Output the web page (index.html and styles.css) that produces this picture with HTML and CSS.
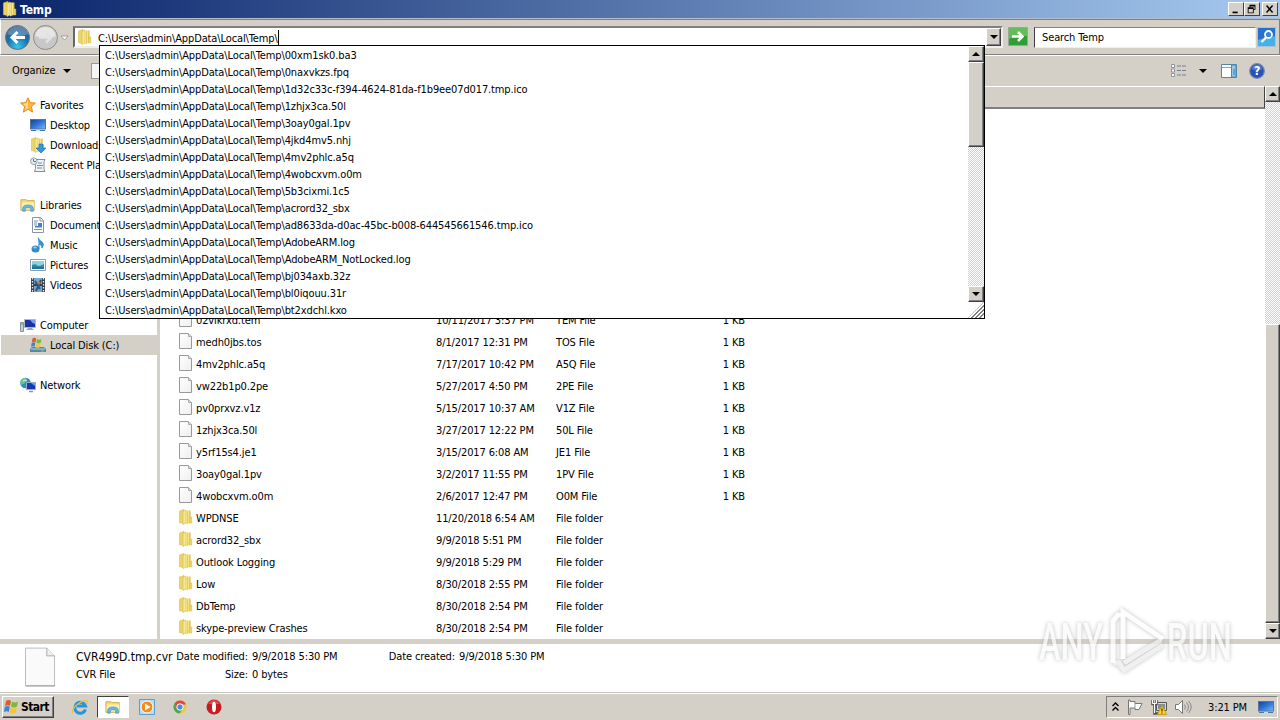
FILE: index.html
```
<!DOCTYPE html>
<html lang="en">
<head>
  <meta charset="UTF-8">
  <meta name="viewport" content="width=device-width, initial-scale=1">
  <title>Temp</title>
  <link rel="stylesheet" href="styles.css">
</head>
<body>
  <!-- Shared icons -->
  <svg class="defs" width="0" height="0">
    <defs>
      <linearGradient id="gold"><stop offset="0" stop-color="#f8eb9b"/><stop offset=".45" stop-color="#e0c04a"/><stop offset=".55" stop-color="#f5e58a"/><stop offset="1" stop-color="#d6ae32"/></linearGradient>
      <linearGradient id="blue" x2="1" y2="1"><stop offset="0" stop-color="#163f9d"/><stop offset=".5" stop-color="#2f75d5"/><stop offset="1" stop-color="#7bbcf2"/></linearGradient>
      <radialGradient id="back" cx=".5" cy=".9" r=".8"><stop offset="0" stop-color="#37c7ee"/><stop offset=".55" stop-color="#1977b5"/><stop offset="1" stop-color="#27598c"/></radialGradient>
      <linearGradient id="paper" x2="1" y2="1"><stop offset="0" stop-color="#fff"/><stop offset="1" stop-color="#eee"/></linearGradient>
    </defs>
    <symbol id="folder" viewBox="0 0 16 16">
      <path d="M1.500 2 6 .5v14l-4.500-.8z" fill="#ead46c" stroke="#d9bd4e" stroke-width=".6"/>
      <path d="M5 2.500 8 1v13l-3 1.500z" fill="#f6e88f" stroke="#d8b94b" stroke-width=".6"/>
      <path d="M8 1.500h4.500v12L8 15.500z" fill="url(#gold)"/>
      <path d="M12 8h1.800v6H11z" fill="#ecd468" stroke="#d8b94b" stroke-width=".5"/>
    </symbol>
    <symbol id="file" viewBox="0 0 16 16">
      <path d="M1.500.5h9l3 3v12h-12z" fill="url(#paper)" stroke="#999"/>
      <path d="M10.500.5v3h3" fill="#ddd" stroke="#aaa"/>
    </symbol>
    <symbol id="explorer" viewBox="0 0 18 16">
      <path d="M1 2h6l1 1h8v11H1z" fill="#f2d778" stroke="#cfac48"/>
      <path d="M2 5h14v8H2z" fill="#fbefaf"/>
      <path d="M3 15v-3q0-4 6-4t6 4v3h-3v-3q0-1-3-1t-3 1v3z" fill="#62b9e8" stroke="#3d91c7" stroke-width=".7"/>
    </symbol>
    <symbol id="screen" viewBox="0 0 16 16">
      <rect x=".5" y="2.500" width="15" height="9.500" fill="url(#blue)" stroke="#5c7396"/>
      <path d="M1 13.500h14" stroke="#4378b6"/><path d="M6 13.500h4" stroke="#b9e6ff"/>
    </symbol>
    <symbol id="flag" viewBox="0 0 16 16">
      <path d="M2 2q3-2 5 0L6 7Q4 5.500 1 7z" fill="#e3592a"/><path d="M8 2.500q3 2 6 0L13 7.500q-3 2-6 0z" fill="#7cba35"/>
      <path d="M.8 8q3-2 5 0l-1 5Q3 11.500 0 13z" fill="#3e84d6"/><path d="M6.800 8.500q3 2 6 0l-1 5q-3 2-6 0z" fill="#f5c532"/>
    </symbol>
  </svg>

  <header class="titlebar">
    <svg class="icon"><use href="#folder"/></svg>
    <h1>Temp</h1>
    <div class="win-btn"><svg viewBox="0 0 16 14"><path d="M4 10h6v2H4z"/></svg></div>
    <div class="win-btn"><svg viewBox="0 0 16 14"><path d="M5 2h7v6h-2V7h1V4H6v1H5zM3 5h7v7H3zm1 2v4h5V7z" fill-rule="evenodd"/></svg></div>
    <div class="win-btn close"><svg viewBox="0 0 16 14"><path d="m4 3 7 8m0-8-7 8" stroke="#000" stroke-width="1.700"/></svg></div>
  </header>

  <div class="navbar">
    <svg class="travel" viewBox="0 0 70 30">
      <circle cx="17.500" cy="15.500" r="12" fill="url(#back)" stroke="#68737d"/>
      <path d="M7 12q3-8 11-8t11 8q-11 4-22 0" fill="#fff" opacity=".25"/>
      <path d="M25 15.500H12m5.500-5.500L12 15.500l5.500 5.500" fill="none" stroke="#fff" stroke-width="3"/>
      <circle cx="45.500" cy="15.500" r="12" fill="#c8c8c8" stroke="#8c8c8c"/>
      <path d="M35 14q2-9 10.500-9T56 14q-10 4-21 0" fill="#eee" opacity=".8"/>
      <path d="M39 15.500h12m-5-5 5 5-5 5" fill="none" stroke="#e2e2e2" stroke-width="2.500"/>
      <path d="M61 14h7l-3.500 4z" fill="#fff" stroke="#8d8d8d" stroke-width=".8"/>
    </svg>
    <div class="address">
      <svg class="icon"><use href="#folder"/></svg>
      <span class="path">C:\Users\admin\AppData\Local\Temp\</span>
      <div class="sb-btn"><i class="down"></i></div>
    </div>
    <svg class="go" viewBox="0 0 20 20">
      <rect x=".5" y=".5" width="19" height="18" fill="#2f9f33" stroke="#9aa894"/><path d="M1 1h18v8Q9 8 1 12z" fill="#63bd5a"/>
      <path d="M4 9.500h11m-5-4.500 4.500 4.500-4.500 4.500" fill="none" stroke="#fff" stroke-width="2.500"/>
    </svg>
    <div class="search">Search Temp</div>
    <svg class="find" viewBox="0 0 20 20">
      <rect width="19" height="20" fill="#286fd0"/><path d="M0 13 19 9v11H0z" fill="#45b1e6"/><path d="M.5.500h18v19H.5z" fill="none" stroke="#a9c4de"/>
      <circle cx="11.500" cy="7.500" r="3.500" fill="#3187dc" stroke="#fff" stroke-width="1.800"/><path d="m9 10.500-4.500 4.500" stroke="#fff" stroke-width="2.400"/>
    </svg>
  </div>

  <div class="toolbar">
    <span>Organize</span><i class="down"></i>
    <div class="tool-box"></div>
    <div class="views">
      <svg width="16" height="14" viewBox="0 0 16 14"><path d="M.5.5h3v3h-3zm0 4.500h3v3h-3zm0 4.500h3v3h-3z" fill="#fff" stroke="#8b9299"/><path d="M6 2h4m1 0h4M6 6.500h4m1 0h4M6 11h4m1 0h4" stroke="#76808d"/></svg>
      <i class="down"></i>
      <svg width="16" height="14" viewBox="0 0 16 14"><path d="M.5.500h15v13H.5z" fill="#fff" stroke="#5384ac"/><path d="M1 3.500h14" stroke="#82a6c4"/><path d="M10.500 1h4.500v12h-4.500z" fill="#91cbe9" stroke="#5384ac"/><path d="M13 5v6" stroke="#397da9"/></svg>
      <svg width="16" height="16" viewBox="0 0 16 16"><circle cx="8" cy="8" r="7.300" fill="#2851b4" stroke="#7487a8" stroke-width="1.200"/><path d="M2.500 6q1-4 5.500-4t5.500 4q-5 3-11 0" fill="#6c91df" opacity=".6"/><text x="8" y="12.200" text-anchor="middle">?</text></svg>
    </div>
  </div>

  <main>
    <nav>
      <div class="group">
        <div class="item top"><svg class="icon" viewBox="0 0 16 16"><path d="m8 .8 2.200 4.800 5.200.5-4 3.500 1.200 5.500L8 12.300l-4.600 2.800 1.200-5.500-4-3.500 5.200-.5z" fill="#ffb63a" stroke="#e58a25"/><path d="M8 3v8l-3 2 1-4-3-2 4-1z" fill="#ffe391"/></svg>Favorites</div>
        <div class="item"><svg class="icon"><use href="#screen"/></svg>Desktop</div>
        <div class="item"><svg class="icon" viewBox="0 0 16 16"><use href="#folder"/><path d="M9 7h4v4h3l-5 5-5-5h3z" fill="#3396df" stroke="#176cb5" stroke-width=".6"/></svg>Downloads</div>
        <div class="item"><svg class="icon" viewBox="0 0 16 16"><path d="M5 2.500h10l-1 2v8l1 2H4.500l1-3z" fill="#edf3f6" stroke="#83919b"/><path d="M8 6h4M7 8.500h6M7 11h5" stroke="#778b9a"/><circle cx="3.800" cy="4.200" r="3.300" fill="#e5eef3" stroke="#91a1ac"/><path d="M3.500 2v2.500H6" fill="none" stroke="#697984"/></svg>Recent Places</div>
      </div>
      <div class="group">
        <div class="item top"><svg class="icon"><use href="#explorer"/></svg>Libraries</div>
        <div class="item"><svg class="icon" viewBox="0 0 16 16"><path d="M2.500.5h8l3 3v12h-11z" fill="#fff" stroke="#8794a5"/><path d="M10 .5v3.500h3.500M4 4h4M4 6h3M4 12.500h8M4 8h3" fill="none" stroke="#7191bd"/><path d="M8 6h4v4.500H5V9h3z" fill="#487ec2"/></svg>Documents</div>
        <div class="item"><svg class="icon" viewBox="0 0 16 16"><path d="M8 .5q1 3 4 4.500 3 2 0 6 .5-3-3-4v5" fill="#3493d2" stroke="#3493d2"/><ellipse cx="5.500" cy="12" rx="4" ry="3.500" fill="#328bcd"/><ellipse cx="5" cy="10.500" rx="2" ry="1" fill="#8acaf0"/></svg>Music</div>
        <div class="item"><svg class="icon" viewBox="0 0 16 16"><path d="M.5 2.500h15v11H.5z" fill="#fff" stroke="#8a9fae"/><path d="M2 4h12v8H2z" fill="#8ad2ed"/><path d="M2 8q4-2 6 1 3 0 6-2v5H2z" fill="#348e8b"/><path d="M2 10h12v2H2z" fill="#236db1"/></svg>Pictures</div>
        <div class="item"><svg class="icon" viewBox="0 0 16 16"><path d="M1 1h14v14H1z" fill="#383e46"/><path d="M4 1h8v6H4zm0 8h8v6H4z" fill="#70a9d5"/><path d="m5 4 5 8M11 3 6 14" stroke="#315578" stroke-width="2"/><circle cx="9" cy="6" r="1.500" fill="#c3733c"/><path d="M2.500 1v14m11-14v14" stroke="#eee" stroke-width="1.300" stroke-dasharray="1.500 1.500"/></svg>Videos</div>
      </div>
      <div class="group">
        <div class="item top"><svg class="icon" viewBox="0 0 16 16"><path d="M.5 5.500h3v9h-3z" fill="#c5d0d3" stroke="#84949b"/><path d="M4.500 2.500h11v8h-11z" fill="#1933a7" stroke="#aebbc4"/><path d="M10 3h5v4q-3-1-5-4" fill="#779aec"/><path d="M8 11h4l2 2H6z" fill="#9ba9ae"/><path d="M1 7h2" stroke="#67a943"/></svg>Computer</div>
        <div class="item selected"><svg class="icon" viewBox="0 0 16 16"><path d="M2 10h12l2 2v3H0v-3z" fill="#58869b"/><path d="M1 12h14" stroke="#b5d7e2"/><path d="M11 14h3" stroke="#75dd4a"/><svg x="1" width="12" height="12" viewBox="0 0 16 16"><use href="#flag"/></svg></svg>Local Disk (C:)</div>
      </div>
      <div class="group">
        <div class="item top"><svg class="icon" viewBox="0 0 16 16"><circle cx="5.500" cy="6" r="5.300" fill="#268fc4"/><path d="M2 2q3-2 5 0L5 6 1 8Q-1 4 2 2" fill="#6cc48f"/><path d="M3 4q2-2 4 0" stroke="#ddf5ff" fill="none"/><path d="M6.500 5.500h9v7h-9z" fill="#1737b5" stroke="#9aabc0"/><path d="M11 6h4v3z" fill="#769bee"/><path d="M9 14.500h4" stroke="#829aac" stroke-width="1.500"/></svg>Network</div>
      </div>
    </nav>

    <section class="files">
      <div class="columns"></div>
      <div class="list">
        <div class="row"><svg class="icon"><use href="#file"/></svg><span>02vikrxd.tem</span><span>10/11/2017 3:37 PM</span><span>TEM File</span><span>1 KB</span></div>
        <div class="row"><svg class="icon"><use href="#file"/></svg><span>medh0jbs.tos</span><span>8/1/2017 12:31 PM</span><span>TOS File</span><span>1 KB</span></div>
        <div class="row"><svg class="icon"><use href="#file"/></svg><span>4mv2phlc.a5q</span><span>7/17/2017 10:42 PM</span><span>A5Q File</span><span>1 KB</span></div>
        <div class="row"><svg class="icon"><use href="#file"/></svg><span>vw22b1p0.2pe</span><span>5/27/2017 4:50 PM</span><span>2PE File</span><span>1 KB</span></div>
        <div class="row"><svg class="icon"><use href="#file"/></svg><span>pv0prxvz.v1z</span><span>5/15/2017 10:37 AM</span><span>V1Z File</span><span>1 KB</span></div>
        <div class="row"><svg class="icon"><use href="#file"/></svg><span>1zhjx3ca.50l</span><span>3/27/2017 12:22 PM</span><span>50L File</span><span>1 KB</span></div>
        <div class="row"><svg class="icon"><use href="#file"/></svg><span>y5rf15s4.je1</span><span>3/15/2017 6:08 AM</span><span>JE1 File</span><span>1 KB</span></div>
        <div class="row"><svg class="icon"><use href="#file"/></svg><span>3oay0gal.1pv</span><span>3/2/2017 11:55 PM</span><span>1PV File</span><span>1 KB</span></div>
        <div class="row"><svg class="icon"><use href="#file"/></svg><span>4wobcxvm.o0m</span><span>2/6/2017 12:47 PM</span><span>O0M File</span><span>1 KB</span></div>
        <div class="row"><svg class="icon"><use href="#folder"/></svg><span>WPDNSE</span><span>11/20/2018 6:54 AM</span><span>File folder</span></div>
        <div class="row"><svg class="icon"><use href="#folder"/></svg><span>acrord32_sbx</span><span>9/9/2018 5:51 PM</span><span>File folder</span></div>
        <div class="row"><svg class="icon"><use href="#folder"/></svg><span>Outlook Logging</span><span>9/9/2018 5:29 PM</span><span>File folder</span></div>
        <div class="row"><svg class="icon"><use href="#folder"/></svg><span>Low</span><span>8/30/2018 2:55 PM</span><span>File folder</span></div>
        <div class="row"><svg class="icon"><use href="#folder"/></svg><span>DbTemp</span><span>8/30/2018 2:54 PM</span><span>File folder</span></div>
        <div class="row"><svg class="icon"><use href="#folder"/></svg><span>skype-preview Crashes</span><span>8/30/2018 2:54 PM</span><span>File folder</span></div>
      </div>
    </section>
    <div class="scrollbar page-scroll">
      <div class="sb-btn"><i class="up"></i></div>
      <div class="track"></div>
      <div class="thumb"></div>
      <div class="sb-btn"><i class="down"></i></div>
    </div>
  </main>

  <footer class="details">
    <svg class="big-file" viewBox="0 0 32 40"><path d="M.5.500h22l8 8v31H.5z" fill="#fafafa" stroke="#bbb"/><path d="M22.500.500v8h8" fill="#eee" stroke="#aaa"/><path d="M1 39.500h30" stroke="#999"/></svg>
    <div class="meta name"><span class="big">CVR499D.tmp.cvr</span><span>CVR File</span></div>
    <div class="meta labels"><span>Date modified:</span><span>Size:</span></div>
    <div class="meta values"><span>9/9/2018 5:30 PM</span><span>0 bytes</span></div>
    <div class="meta labels created"><span>Date created:</span></div>
    <div class="meta values"><span>9/9/2018 5:30 PM</span></div>
  </footer>

  <div class="taskbar">
    <div class="start"><svg class="icon"><use href="#flag"/></svg>Start</div>
    <div class="task"><svg class="icon" viewBox="0 0 16 16"><path d="M13.500 10.500A5.500 5.500 0 1 1 13.500 7H5" fill="none" stroke="#2795dc" stroke-width="3"/><path d="M1 14Q-1 10 6 5t9-3q1 1-1 3" fill="none" stroke="#e8c349" stroke-width="1.300"/></svg></div>
    <div class="task active"><svg class="icon"><use href="#explorer"/></svg></div>
    <div class="task"><svg class="icon" viewBox="0 0 16 16"><path d="M.5.500h15v15H.5z" fill="#b9dcf3" stroke="#5a9fd4"/><circle cx="8" cy="8" r="6" fill="#f58b1c" stroke="#fff"/><path d="m6 4.500 5.500 3.500L6 11.500z" fill="#fff"/></svg></div>
    <div class="task"><svg class="icon" viewBox="0 0 16 16"><circle cx="8" cy="8" r="6.500" fill="#f5c735"/><path d="M2.300 4.800A6.500 6.500 0 0 1 14 5.500H8L5 10z" fill="#df4936"/><path d="M2.300 4.800A6.500 6.500 0 0 0 7.500 14.500L10.500 10H5z" fill="#43a852"/><circle cx="8" cy="8" r="3.200" fill="#4689e9" stroke="#fff"/></svg></div>
    <div class="task"><svg class="icon" viewBox="0 0 16 16"><circle cx="8" cy="8" r="7.500" fill="#c51c20"/><path d="M2 5q6-8 12 0" fill="#ef6860" opacity=".6"/><ellipse cx="8" cy="8" rx="2" ry="5.300" fill="#fff"/></svg></div>
    <div class="tray">
      <svg width="7" height="10" viewBox="0 0 7 10"><path d="m.5 4 3-3 3 3m-6 4.500 3-3 3 3" fill="none" stroke="#000" stroke-width="1.400"/></svg>
      <svg width="16" height="16" viewBox="0 0 16 16"><path d="M1.500 1v14.500h1.500V9h5v1.500h4l3-6H8V2.500H3V1z" fill="#fff" stroke="#777"/><path d="M8 4v5" stroke="#999"/></svg>
      <svg width="16" height="16" viewBox="0 0 16 16"><path d="M5.500 3.500h10v8h-10z" fill="#d7dadd" stroke="#555"/><path d="M7 5h7v5H7z" fill="#868c91"/><path d="M1.500 1v4h4V1M3.500 5v9.500h4" fill="none" stroke="#555" stroke-width="2.500"/><path d="M1.500 1v3.500h4V1M3.500 5v9" fill="none" stroke="#fff"/><path d="m11 6.500 4.500 9h-9z" fill="#ffda25" stroke="#c99a18"/><path d="M11 9.500v3m0 1v1" stroke="#000"/></svg>
      <svg width="17" height="16" viewBox="0 0 17 16"><path d="M.5 5.500h3l4-4v13l-4-4h-3z" fill="#fff" stroke="#777"/><path d="M9.500 5.500q2 2.500 0 5M11.500 3.500q4 4.500 0 9M13.500 2q5.500 6 0 12" fill="none" stroke="#888"/></svg>
      <span class="clock">3:21 PM</span>
      <svg class="icon"><use href="#screen"/></svg>
    </div>
  </div>

  <!-- Address suggestions -->
  <div class="suggest">
    <ul>
      <li>C:\Users\admin\AppData\Local\Temp\00xm1sk0.ba3</li>
      <li>C:\Users\admin\AppData\Local\Temp\0naxvkzs.fpq</li>
      <li>C:\Users\admin\AppData\Local\Temp\1d32c33c-f394-4624-81da-f1b9ee07d017.tmp.ico</li>
      <li>C:\Users\admin\AppData\Local\Temp\1zhjx3ca.50l</li>
      <li>C:\Users\admin\AppData\Local\Temp\3oay0gal.1pv</li>
      <li>C:\Users\admin\AppData\Local\Temp\4jkd4mv5.nhj</li>
      <li>C:\Users\admin\AppData\Local\Temp\4mv2phlc.a5q</li>
      <li>C:\Users\admin\AppData\Local\Temp\4wobcxvm.o0m</li>
      <li>C:\Users\admin\AppData\Local\Temp\5b3cixmi.1c5</li>
      <li>C:\Users\admin\AppData\Local\Temp\acrord32_sbx</li>
      <li>C:\Users\admin\AppData\Local\Temp\ad8633da-d0ac-45bc-b008-644545661546.tmp.ico</li>
      <li>C:\Users\admin\AppData\Local\Temp\AdobeARM.log</li>
      <li>C:\Users\admin\AppData\Local\Temp\AdobeARM_NotLocked.log</li>
      <li>C:\Users\admin\AppData\Local\Temp\bj034axb.32z</li>
      <li>C:\Users\admin\AppData\Local\Temp\bl0iqouu.31r</li>
      <li>C:\Users\admin\AppData\Local\Temp\bt2xdchl.kxo</li>
    </ul>
    <div class="scrollbar">
      <div class="sb-btn"><i class="up"></i></div>
      <div class="thumb"></div>
      <div class="track"></div>
      <div class="sb-btn"><i class="down"></i></div>
      <div class="grip"></div>
    </div>
  </div>

  <!-- Watermark -->
  <svg class="watermark" viewBox="0 0 208 72">
    <text x="8" y="55" textLength="64" lengthAdjust="spacingAndGlyphs">ANY</text>
    <path class="low" d="M82 58h6l5 7 39-25M93 58l37-23"/>
    <path d="M91 10h-4l-5 6v42M92 54V7l40 27"/>
    <text x="136" y="55" textLength="65" lengthAdjust="spacingAndGlyphs">RUN</text>
  </svg>
</body>
</html>
```
FILE: styles.css
```
:root {
  --face: #d4d0c8;
  --shadow: #808080;
  --dark: #404040;
}

* { box-sizing: border-box; }
body { margin:0; width:1280px; height:720px; overflow:hidden; position:relative; display:flex; flex-direction:column; background:#fff; color:#000; font:11px/14px "DejaVu Sans Condensed", "DejaVu Sans", sans-serif; font-stretch:condensed; letter-spacing:-0.12px; white-space:nowrap; }
svg { display:block; flex:none; }
.defs { position:absolute; }
.icon { width:16px; height:16px; }

/* Triangles */
.down, .up { width:0; height:0; border:4px solid transparent; border-bottom:0; border-top-color:#000; }
.up { border:4px solid transparent; border-top:0; border-bottom-color:#000; }

/* Title bar */
.titlebar { flex:none; height:19px; display:flex; align-items:center; padding:0 2px; background:linear-gradient(90deg, #0a246a, #a6caf0); border-bottom:1px solid #b5bccb; }
.titlebar h1 { flex:1; margin:0 0 0 2px; padding-top:1px; color:#fff; font-size:12px; font-weight:bold; }
.win-btn { width:16px; height:14px; background:var(--face); border:1px solid; border-color:#fff var(--dark) var(--dark) #fff; }
.win-btn svg { width:14px; height:12px; }
.close { margin-left:2px; }

/* Address row */
.navbar { flex:none; height:36px; display:flex; align-items:center; padding-left:1px; background:var(--face); border:1px solid #fff; border-top-color:var(--shadow); border-right-color:var(--shadow); border-bottom-color:var(--shadow); }
.travel { width:70px; height:30px; margin-left:-2px; }
.address { width:930px; height:22px; display:flex; align-items:center; margin-left:3px; padding-left:2px; background:#fff; border:2px solid; border-color:var(--shadow) #eee #eee #666; }
.path { margin-left:5px; padding-top:2px; border-right:1px solid #000; line-height:13px; }
.address .sb-btn { margin-left:auto; height:18px; width:15px; }
.go { width:20px; height:20px; margin-left:5px; }
.search { width:222px; height:21px; margin-left:6px; padding:3px 7px 0; background:#fff; border:1px solid; border-color:var(--shadow) #eee #eee var(--dark); }
.find { width:20px; height:20px; margin-left:1px; }

/* Toolbar */
.toolbar { flex:none; height:31px; display:flex; align-items:center; padding:0 15px 0 12px; background:var(--face); border-top:1px solid #fff; }
.toolbar > .down { margin-left:8px; }
.tool-box { width:20px; height:16px; margin-left:20px; background:#f5f5f5; border:1px solid #999; }
.views { display:flex; align-items:center; margin-left:auto; }
.views .down { margin:0 14px 0 12px; }
.views svg:last-child { margin-left:12px; }
.views text { fill:#fff; font-size:12px; font-weight:bold; }

/* Folder tree */
main { flex:none; height:553px; display:flex; }
nav { width:160px; padding-top:9px; border-right:3px solid var(--face); }
.group { margin-bottom:20px; }
.item { height:20px; display:flex; align-items:center; gap:4px; margin:0 0 0 1px; padding:2px 0 0 29px; }
.item .icon { margin-top:-2px; }
.top { padding-left:19px; }
.selected { background:var(--face); }

/* File list */
.files { flex:1; display:flex; flex-direction:column; min-width:0; }
.columns { flex:none; height:23px; background:var(--face); border:1px solid; border-color:#fff var(--dark) var(--shadow) #fff; border-bottom-width:2px; }
.list { flex:1; display:flex; flex-direction:column; justify-content:flex-end; overflow:hidden; }
.row { height:22px; flex:none; display:grid; grid-template-columns:18px 240px 120px 120px 69px; align-items:center; padding-left:18px; }
.row .icon { margin-top:-2px; }
.row span { padding-top:2px; }
.row span:nth-child(5) { text-align:right; }

/* Scrollbars */
.scrollbar { width:16px; flex:none; display:flex; flex-direction:column; }
.page-scroll { width:15px; }
.sb-btn, .thumb { flex:none; background:var(--face); border:1px solid; border-color:#fff var(--dark) var(--dark) #fff; box-shadow:inset -1px -1px var(--shadow); }
.sb-btn { height:16px; display:flex; align-items:center; justify-content:center; }
.thumb { height:85px; }
.track { flex:1; background:repeating-conic-gradient(#fff 0 25%, var(--face) 0 50%) 0 0 / 2px 2px; }
.page-scroll .thumb { height:299px; }

/* Details pane */
.details { flex:none; height:53px; display:flex; align-items:flex-start; padding-left:25px; border-top:5px solid var(--face); }
.big-file { width:31px; height:40px; margin-top:3px; }
.meta { display:flex; flex-direction:column; gap:4px; margin-top:6px; }
.name { width:98px; margin-left:20px; }
.big { font-size:12px; letter-spacing:0; }
.labels { width:74px; text-align:right; }
.values { width:88px; margin-left:4px; }
.created { margin-left:41px; }

/* Taskbar */
.taskbar { flex:none; height:28px; display:flex; align-items:center; gap:1.5px; padding:1px 2px 0; background:var(--face); border-top:1px solid #c5c3bd; box-shadow:inset 0 1px #fff; }
.start { width:52px; height:22px; display:flex; align-items:center; gap:1px; padding-left:1px; margin-right:8px; font-size:12px; font-weight:bold; letter-spacing:-0.6px; border:1px solid; border-color:#fff var(--dark) var(--dark) #fff; box-shadow:inset -1px -1px var(--shadow); }
.task { width:32px; height:22px; display:grid; place-items:center; }
.active { background:#fff; border:1px solid; border-color:var(--dark) #fff #fff var(--dark); }
.tray { width:172px; height:22px; display:flex; align-items:center; gap:8px; margin-left:auto; padding-left:5px; border:1px solid; border-color:var(--shadow) #fff #fff var(--shadow); }
.clock { margin-left:8px; padding-top:2px; }
.tray .icon { margin-left:3px; }

/* Suggestion popup */
.suggest { position:absolute; left:99px; top:45px; width:886px; height:274px; display:flex; background:#fff; border:1px solid #000; }
.suggest ul { flex:1; margin:0; padding:0 0 0 5px; list-style:none; }
.suggest li { height:17px; line-height:20px; }
.grip { height:16px; background:repeating-linear-gradient(135deg, #fff 0 1px, #808080 1px 2.500px, #fff 2.500px 3px); clip-path:polygon(100% 0, 100% 100%, 0 100%); }

.watermark { position:absolute; left:1031px; top:605px; width:208px; height:72px; opacity:.75; filter:drop-shadow(0 0 2px #aaa); overflow:visible; }
.watermark text { font:500 52px Roboto, sans-serif; letter-spacing:0; fill:#fafafa; }
.watermark path { fill:none; stroke:#fdfdfd; stroke-width:5; }
.watermark .low { stroke:#ececec; }
```
